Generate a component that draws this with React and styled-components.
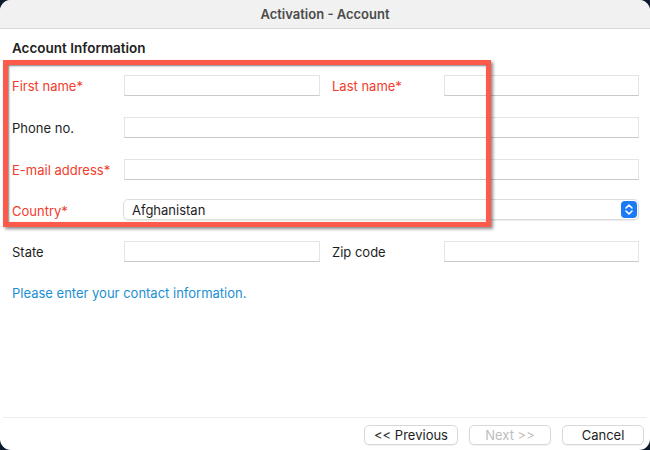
import styled, { createGlobalStyle } from "styled-components";

const Global = createGlobalStyle`
  html, body { margin: 0; padding: 0; background: #0c1a2b; }
  body { font-family: Inter, "Liberation Sans", sans-serif; }
`;

const Window = styled.div`
  position: relative;
  width: 650px;
  height: 450px;
  border-radius: 11px;
  overflow: hidden;
  background: #ffffff;
  display: flex;
  flex-direction: column;
`;

const TitleBar = styled.div`
  height: 28px;
  flex: none;
  background: #f1f1f1;
  border-bottom: 1px solid #d9d9d9;
  display: flex;
  align-items: center;
  justify-content: center;
  font-size: 13px;
  font-weight: 600;
  color: #4b4b4b;
`;

const Body = styled.div`
  flex: 1;
  padding: 10px 11px 0 12px;
`;

const Heading = styled.div`
  font-size: 13.5px;
  font-weight: 600;
  color: #222;
  height: 18px;
  line-height: 18px;
`;

const Form = styled.div`
  display: grid;
  grid-template-columns: 112px 196px 12px 112px 195px;
  grid-template-rows: 21px 21px 21px 19px 21px;
  row-gap: 21px;
  margin-top: 18px;
  align-items: center;
`;

const Label = styled.div`
  grid-column: ${(p) => (p.right ? "4" : "1")};
  font-size: 13px;
  color: ${(p) => (p.required ? "#f23b2c" : "#1e1e1e")};
`;

const Input = styled.div`
  grid-column: ${(p) => (p.wide ? "2 / 6" : p.right ? "5" : "2")};
  height: 21px;
  box-sizing: border-box;
  background: #fff;
  border: 1px solid #e4e4e4;
  border-bottom-color: #c9c9c9;
`;

const Select = styled.div`
  grid-column: 2 / 6;
  align-self: end;
  margin-left: -1px;
  height: 21px;
  box-sizing: border-box;
  border: 1px solid #dcdcdc;
  border-radius: 5px;
  box-shadow: 0 1px 1px rgba(0, 0, 0, 0.08);
  display: flex;
  align-items: center;
  justify-content: space-between;
  padding: 0 1px 0 8px;
  font-size: 13px;
  color: #1e1e1e;
`;

const Stepper = styled.div`
  width: 16px;
  height: 17px;
  border-radius: 4px;
  background: #1c7bf4;
  display: flex;
  align-items: center;
  justify-content: center;
`;

const Info = styled.div`
  margin-top: 23px;
  font-size: 13px;
  color: #1a8fd4;
`;

const Footer = styled.div`
  flex: none;
  margin: 0 3px;
  border-top: 1px solid #ececec;
  padding: 7px 3px 5px 0;
  display: flex;
  justify-content: flex-end;
  gap: 11px;
`;

const Button = styled.div`
  width: ${(p) => p.w}px;
  height: 20px;
  box-sizing: border-box;
  border: 1px solid #d8d8d8;
  border-radius: 5px;
  box-shadow: 0 1px 1px rgba(0, 0, 0, 0.06);
  background: #fff;
  display: flex;
  align-items: center;
  justify-content: center;
  font-size: 13px;
  color: ${(p) => (p.disabled ? "#bdbdbd" : "#1e1e1e")};
`;

const Highlight = styled.div`
  position: absolute;
  left: 3px;
  top: 60px;
  width: 488px;
  height: 167px;
  box-sizing: border-box;
  border: 5px solid #fe5a4c;
  box-shadow: 2px 2px 3px rgba(0, 0, 0, 0.45), inset 1px 1px 2px rgba(0, 0, 0, 0.5);
  pointer-events: none;
`;

export default function App() {
  return (
    <>
      <Global />
      <Window>
        <TitleBar>Activation - Account</TitleBar>
        <Body>
          <Heading>Account Information</Heading>
          <Form>
            <Label required>First name*</Label>
            <Input />
            <Label required right>Last name*</Label>
            <Input right />

            <Label>Phone no.</Label>
            <Input wide />

            <Label required>E-mail address*</Label>
            <Input wide />

            <Label required>Country*</Label>
            <Select>
              <span>Afghanistan</span>
              <Stepper>
                <svg width="10" height="13" viewBox="0 0 10 13" fill="none" stroke="#fff" strokeWidth="1.6" strokeLinecap="round" strokeLinejoin="round">
                  <path d="M2 5l3-3 3 3" />
                  <path d="M2 8l3 3 3-3" />
                </svg>
              </Stepper>
            </Select>

            <Label>State</Label>
            <Input />
            <Label right>Zip code</Label>
            <Input right />
          </Form>
          <Info>Please enter your contact information.</Info>
        </Body>
        <Footer>
          <Button w={94}>&lt;&lt; Previous</Button>
          <Button w={82} disabled>Next &gt;&gt;</Button>
          <Button w={82}>Cancel</Button>
        </Footer>
        <Highlight />
      </Window>
    </>
  );
}
